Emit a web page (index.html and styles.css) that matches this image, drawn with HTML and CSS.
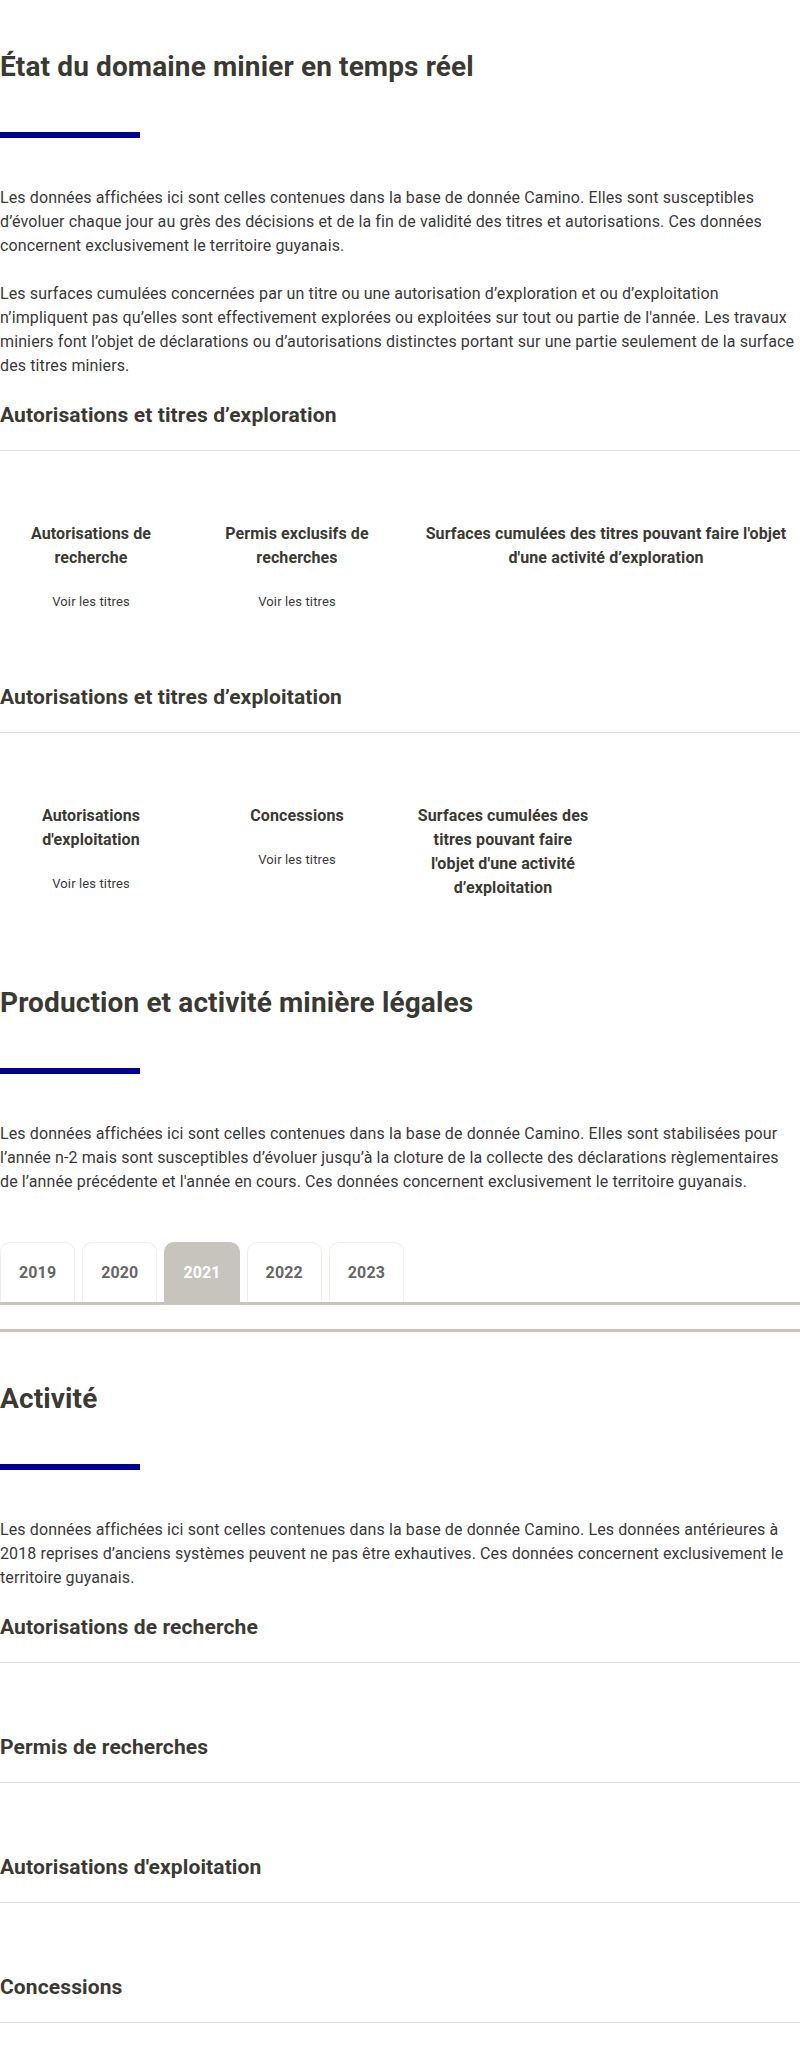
FILE: index.html
```html
<!DOCTYPE html>
<html lang="fr">
<head>
<meta charset="utf-8">
<title>Statistiques Guyane</title>
<link rel="stylesheet" href="styles.css">
</head>
<body>
<main class="page">
  <section class="block block--first">
    <h2 class="block-title">État du domaine minier en temps réel</h2>
    <div class="title-bar"></div>
    <p class="lead">Les données affichées ici sont celles contenues dans la base de donnée Camino. Elles sont susceptibles d’évoluer chaque jour au grès des décisions et de la fin de validité des titres et autorisations. Ces données concernent exclusivement le territoire guyanais.</p>
    <p class="lead lead--next">Les surfaces cumulées concernées par un titre ou une autorisation d’exploration et ou d’exploitation n’impliquent pas qu’elles sont effectivement explorées ou exploitées sur tout ou partie de l'année. Les travaux miniers font l’objet de déclarations ou d’autorisations distinctes portant sur une partie seulement de la surface des titres miniers.</p>

    <h3 class="sub-title">Autorisations et titres d’exploration</h3>
    <div class="cards">
      <div class="card">
        <p class="card-title">Autorisations de recherche</p>
        <a class="card-link" href="#">Voir les titres</a>
      </div>
      <div class="card">
        <p class="card-title">Permis exclusifs de recherches</p>
        <a class="card-link" href="#">Voir les titres</a>
      </div>
      <div class="card card--wide">
        <p class="card-title">Surfaces cumulées des titres pouvant faire l'objet d'une activité d’exploration</p>
      </div>
    </div>

    <h3 class="sub-title">Autorisations et titres d’exploitation</h3>
    <div class="cards">
      <div class="card">
        <p class="card-title">Autorisations d'exploitation</p>
        <a class="card-link" href="#">Voir les titres</a>
      </div>
      <div class="card">
        <p class="card-title">Concessions</p>
        <a class="card-link" href="#">Voir les titres</a>
      </div>
      <div class="card">
        <p class="card-title">Surfaces cumulées des titres pouvant faire l'objet d'une activité d’exploitation</p>
      </div>
    </div>
  </section>

  <section class="block">
    <h2 class="block-title">Production et activité minière légales</h2>
    <div class="title-bar"></div>
    <p class="lead">Les données affichées ici sont celles contenues dans la base de donnée Camino. Elles sont stabilisées pour l’année n-2 mais sont susceptibles d’évoluer jusqu’à la cloture de la collecte des déclarations règlementaires de l’année précédente et l'année en cours. Ces données concernent exclusivement le territoire guyanais.</p>
    <div class="tabs">
      <ul class="tab-list">
        <li class="tab">2019</li>
        <li class="tab">2020</li>
        <li class="tab tab--active">2021</li>
        <li class="tab">2022</li>
        <li class="tab">2023</li>
      </ul>
      <div class="tab-panel"></div>
    </div>
  </section>

  <section class="block block--activity">
    <h2 class="block-title">Activité</h2>
    <div class="title-bar"></div>
    <p class="lead">Les données affichées ici sont celles contenues dans la base de donnée Camino. Les données antérieures à 2018 reprises d’anciens systèmes peuvent ne pas être exhautives. Ces données concernent exclusivement le territoire guyanais.</p>
    <h3 class="sub-title">Autorisations de recherche</h3>
    <div class="empty-row"></div>
    <h3 class="sub-title">Permis de recherches</h3>
    <div class="empty-row"></div>
    <h3 class="sub-title">Autorisations d'exploitation</h3>
    <div class="empty-row"></div>
    <h3 class="sub-title">Concessions</h3>
  </section>
</main>
</body>
</html>
```

FILE: styles.css
```css
* { box-sizing: border-box; }

html, body {
  margin: 0;
  padding: 0;
  background: #ffffff;
}

body {
  font-family: Roboto, Inter, "Liberation Sans", sans-serif;
  color: #3a3a3a;
  letter-spacing: 0.12px;
}

.page {
  width: 800px;
  padding-top: 49px;
  padding-bottom: 23px;
}

.block-title {
  margin: 0;
  font-size: 28px;
  line-height: 36px;
  font-weight: 700;
  color: #3a3a33;
}

.title-bar {
  width: 140px;
  height: 6px;
  margin-top: 47px;
  background: #000091;
}

.lead {
  margin: 48px 0 0;
  font-size: 16px;
  line-height: 24px;
  color: #3a3a3a;
}

.lead--next {
  margin-top: 24px;
}

.sub-title {
  margin: 23px 0 0;
  padding-bottom: 21px;
  border-bottom: 1px solid #dddddd;
  font-size: 21px;
  line-height: 28px;
  font-weight: 700;
  color: #3a3a33;
}

.cards {
  display: grid;
  grid-template-columns: repeat(4, 1fr);
  column-gap: 24px;
  padding-top: 71px;
}

.card {
  display: flex;
  flex-direction: column;
  align-items: center;
  text-align: center;
}

.card--wide {
  grid-column: span 2;
}

.card-title {
  margin: 0;
  font-size: 16px;
  line-height: 24px;
  font-weight: 700;
  color: #3a3a33;
}

.card-link {
  margin-top: 20px;
  font-size: 13px;
  line-height: 24px;
  color: #3a3a3a;
  text-decoration: none;
}

.cards + .sub-title {
  margin-top: 69px;
}

.block + .block {
  margin-top: 85px;
}

.tabs {
  margin-top: 48px;
}

.tab-list {
  list-style: none;
  margin: 0;
  padding: 0;
  display: flex;
  gap: 7px;
  border-bottom: 3px solid #c6c4bc;
}

.tab {
  height: 60px;
  padding: 0 18px;
  display: flex;
  align-items: center;
  justify-content: center;
  border: 1px solid #efeee9;
  border-bottom: none;
  border-radius: 10px 10px 0 0;
  background: #ffffff;
  font-size: 16px;
  font-weight: 700;
  color: #666666;
}

.tab--active {
  background: #c6c4bc;
  border-color: #c6c4bc;
  color: #ffffff;
}

.tab-panel {
  height: 27px;
  border-bottom: 3px solid #c6c4bc;
}

.block.block--activity {
  margin-top: 49px;
}

.empty-row {
  height: 70px;
}

.empty-row + .sub-title {
  margin-top: 0;
}
```
